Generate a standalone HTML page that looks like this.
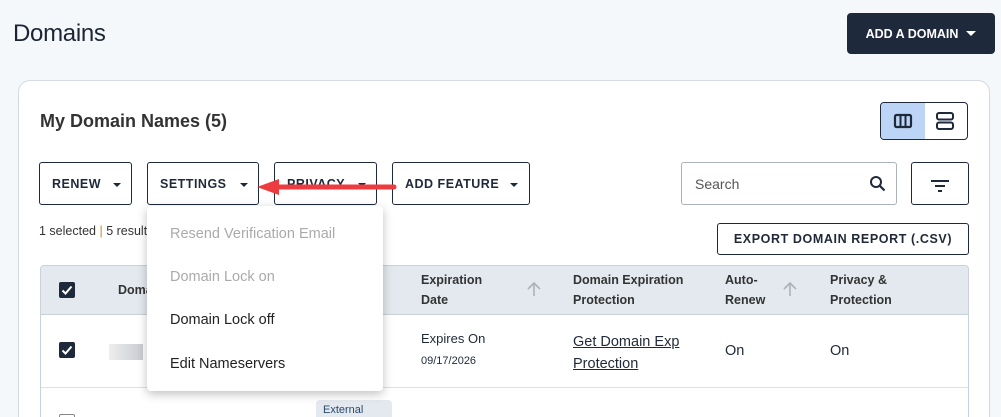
<!DOCTYPE html>
<html style="width:1001px;height:417px;overflow:hidden"><head><style>
*{box-sizing:border-box;margin:0;padding:0}
body{width:1001px;height:417px;overflow:hidden;background:#f5f8fb;font-family:"Liberation Sans",sans-serif;color:#1f2937}
#w{position:relative;width:1001px;height:417px;overflow:hidden}
.abs{position:absolute}
h1{position:absolute;left:13px;top:20px;font-size:24px;font-weight:400;color:#1c2533;letter-spacing:-0.3px}
.add{left:847px;top:13px;width:148px;height:41px;background:#1e293b;border-radius:4px;color:#fff;font-weight:700;font-size:12.5px;display:flex;align-items:center;justify-content:center;gap:8px}
.card{left:18px;top:80px;width:972px;height:337px;background:#fff;border:1px solid #d5dbe2;border-bottom:none;border-radius:12px 12px 0 0}
.t2{left:40px;top:111px;font-size:18px;font-weight:700;color:#333}
.btn{position:absolute;top:162px;height:43px;border:1px solid #1e293b;border-radius:3px;background:#fff;font-size:12.5px;font-weight:700;letter-spacing:.5px;display:flex;align-items:center;padding-left:12px;color:#1e293b}
.car{width:0;height:0;border-left:4px solid transparent;border-right:4px solid transparent;border-top:4px solid #1e293b;position:absolute;top:20px}
.th{position:absolute;font-size:12.5px;font-weight:700;color:#333;line-height:20px}
.cb{position:absolute;width:16px;height:16px;background:#1e293b;border-radius:2px}
.menu{left:147px;top:206px;width:236px;height:185px;background:#fff;border-radius:4px;box-shadow:0 3px 10px rgba(0,0,0,.25)}
.mi{position:absolute;left:23px;font-size:14.5px}
</style></head><body><div id="w">
<h1>Domains</h1>
<div class="abs add">ADD A DOMAIN <span style="border-left:5px solid transparent;border-right:5px solid transparent;border-top:5px solid #fff"></span></div>
<div class="abs card"></div>
<div class="abs t2">My Domain Names (5)</div>
<div class="abs" style="left:880px;top:102px;width:88px;height:38px;border:1px solid #1e293b;border-radius:4px;overflow:hidden;background:#fff">
 <div style="position:absolute;left:0;top:0;width:44px;height:38px;background:#bcd4f5"></div>
 <svg class="abs" style="left:12px;top:10px" width="20" height="16"><rect x="2" y="2" width="16" height="12" rx="1.5" fill="none" stroke="#1e293b" stroke-width="2.2"/><line x1="7.5" y1="2" x2="7.5" y2="14" stroke="#1e293b" stroke-width="2"/><line x1="12.5" y1="2" x2="12.5" y2="14" stroke="#1e293b" stroke-width="2"/></svg>
 <svg class="abs" style="left:54px;top:8px" width="20" height="20"><rect x="2" y="2" width="16" height="6.5" rx="2" fill="none" stroke="#1e293b" stroke-width="2"/><rect x="2" y="11.5" width="16" height="6.5" rx="2" fill="none" stroke="#1e293b" stroke-width="2"/></svg>
</div>
<div class="btn" style="left:39px;width:93px">RENEW<span class="car" style="left:73px"></span></div>
<div class="btn" style="left:147px;width:112px">SETTINGS<span class="car" style="left:92px"></span></div>
<div class="btn" style="left:274px;width:103px">PRIVACY<span class="car" style="left:83px"></span></div>
<div class="btn" style="left:392px;width:138px">ADD FEATURE<span class="car" style="left:117px"></span></div>
<div class="abs" style="left:681px;top:162px;width:216px;height:43px;border:1px solid #aab2bb;border-radius:3px;background:#fff;font-size:14px;color:#555;padding:13px 0 0 13px">Search
<svg class="abs" style="right:9px;top:12px" width="18" height="18"><circle cx="7" cy="7" r="5" fill="none" stroke="#1e293b" stroke-width="2"/><line x1="10.5" y1="10.5" x2="15.5" y2="15.5" stroke="#1e293b" stroke-width="2.2"/></svg></div>
<div class="abs" style="left:911px;top:162px;width:58px;height:43px;border:1px solid #1e293b;border-radius:3px;background:#fff">
<svg class="abs" style="left:19px;top:17px" width="18" height="12"><line x1="0" y1="1" x2="18" y2="1" stroke="#1e293b" stroke-width="2"/><line x1="4" y1="6" x2="14" y2="6" stroke="#1e293b" stroke-width="2"/><line x1="7" y1="11" x2="11" y2="11" stroke="#1e293b" stroke-width="2"/></svg></div>
<div class="abs" style="left:39px;top:224px;font-size:12.5px;color:#333">1 selected <span style="color:#c58a2a">|</span> 5 results</div>
<div class="abs" style="left:717px;top:223px;width:252px;height:32px;border:1px solid #1e293b;border-radius:3px;background:#fff;font-size:12.5px;font-weight:700;letter-spacing:.6px;display:flex;align-items:center;justify-content:center">EXPORT DOMAIN REPORT (.CSV)</div>
<div class="abs" style="left:40px;top:265px;width:929px;height:152px;border:1px solid #c9d1d9;border-bottom:none;border-radius:4px 4px 0 0;background:#fff;overflow:hidden">
 <div style="height:49px;background:#e3e9ee;border-bottom:1px solid #c9d1d9"></div>
 <div style="position:absolute;top:121px;left:0;right:0;border-top:1px solid #dde2e7"></div>
</div>
<div class="cb" style="left:59px;top:282px"></div>
<svg class="abs" style="left:59px;top:282px" width="16" height="16"><path d="M3.5 8.5 L6.5 11.5 L12.5 4.5" fill="none" stroke="#fff" stroke-width="2"/></svg>
<div class="th" style="left:118px;top:280px">Domain</div>
<div class="th" style="left:421px;top:270px">Expiration<br>Date</div>
<div class="th" style="left:573px;top:270px">Domain Expiration<br>Protection</div>
<div class="th" style="left:725px;top:270px">Auto-<br>Renew</div>
<div class="th" style="left:830px;top:270px">Privacy &amp;<br>Protection</div>
<svg class="abs" style="left:526px;top:281px" width="16" height="16"><path d="M8 15V2M2 8l6-6 6 6" fill="none" stroke="#aab2bb" stroke-width="1.6"/></svg>
<svg class="abs" style="left:782px;top:281px" width="16" height="16"><path d="M8 15V2M2 8l6-6 6 6" fill="none" stroke="#aab2bb" stroke-width="1.6"/></svg>
<div class="cb" style="left:59px;top:342px"></div>
<svg class="abs" style="left:59px;top:342px" width="16" height="16"><path d="M3.5 8.5 L6.5 11.5 L12.5 4.5" fill="none" stroke="#fff" stroke-width="2"/></svg>
<div class="abs" style="left:109px;top:344px;width:34px;height:16px;background:linear-gradient(90deg,#eee,#c8cbd0)"></div>
<div class="abs" style="left:421px;top:331px;font-size:13px">Expires On</div>
<div class="abs" style="left:421px;top:355px;font-size:11px">09/17/2026</div>
<div class="abs" style="left:573px;top:331px;font-size:14.5px;line-height:22px;text-decoration:underline">Get Domain Exp<br>Protection</div>
<div class="abs" style="left:725px;top:343px;font-size:14.5px">On</div>
<div class="abs" style="left:830px;top:343px;font-size:14.5px">On</div>
<div class="abs" style="left:59px;top:414px;width:16px;height:3px;border:1px solid #888;border-bottom:none;border-radius:2px 2px 0 0"></div>
<div class="abs" style="left:316px;top:400px;width:76px;height:17px;background:#e3e9ee;border-radius:4px 4px 0 0;font-size:11px;color:#2a4a6a;padding:4px 0 0 7px;overflow:hidden">External</div>
<div class="abs menu">
 <div class="mi" style="top:20px;color:#aaa">Resend Verification Email</div>
 <div class="mi" style="top:63px;color:#aaa">Domain Lock on</div>
 <div class="mi" style="top:106px;color:#222">Domain Lock off</div>
 <div class="mi" style="top:150px;color:#222">Edit Nameservers</div>
</div>
<svg class="abs" style="left:255px;top:175px" width="145" height="24"><line x1="20" y1="12" x2="139" y2="12" stroke="#ee3b3f" stroke-width="5" stroke-linecap="round"/><path d="M2 12 L24 4 L24 20 Z" fill="#ee3b3f"/></svg>
</div></body></html>
